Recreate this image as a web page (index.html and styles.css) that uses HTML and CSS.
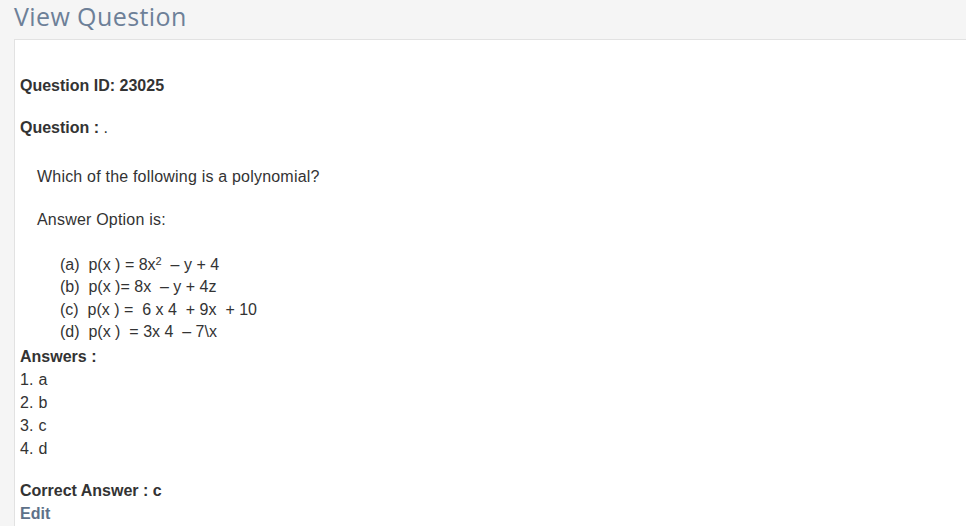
FILE: index.html
```html
<!DOCTYPE html>
<html>
<head>
<meta charset="utf-8">
<link rel="stylesheet" href="styles.css">
</head>
<body>
<h1 class="page-title">View Question</h1>
<div class="panel">
  <p class="label qid">Question ID: 23025</p>
  <p class="label qhead">Question : <span class="dot">.</span></p>
  <div class="question">
    <p class="qtext">Which of the following is a polynomial?</p>
    <p class="qtext opt-head">Answer Option is:</p>
    <div class="options">
      <div class="opt">(a)  p(x ) = 8x<sup>2</sup>  – y + 4</div>
      <div class="opt">(b)  p(x )= 8x  – y + 4z</div>
      <div class="opt">(c)  p(x ) =  6 x 4  + 9x  + 10</div>
      <div class="opt">(d)  p(x )  = 3x 4  – 7\x</div>
    </div>
  </div>
  <p class="label answers-head">Answers :</p>
  <ol class="answers">
    <li>1. a</li>
    <li>2. b</li>
    <li>3. c</li>
    <li>4. d</li>
  </ol>
  <p class="label correct">Correct Answer : c</p>
  <a class="edit" href="#">Edit</a>
</div>
</body>
</html>
```

FILE: styles.css
```css
html, body {
  margin: 0;
  padding: 0;
  background: #f5f5f5;
  height: 100%;
  overflow: hidden;
}
body {
  font-family: "Liberation Sans", Arial, sans-serif;
  font-size: 16px;
  color: #333;
}
.page-title {
  margin: 0;
  padding-left: 14px;
  font-family: "Open Sans", sans-serif;
  font-weight: 400;
  font-size: 25px;
  letter-spacing: 0.4px;
  line-height: 33px;
  color: #6d8098;
}
.panel {
  margin-top: 6px;
  margin-left: 14px;
  background: #fff;
  border-top: 1px solid #e2e2e2;
  border-left: 1px solid #e2e2e2;
  padding: 34px 0 40px 5px;
  min-height: 600px;
}
p { margin: 0; }
.label {
  font-weight: bold;
  line-height: 23px;
}
.qhead { margin-top: 19px; }
.dot { font-weight: normal; }
.question {
  padding-left: 17px;
  margin-top: 26px;
}
.qtext {
  line-height: 23px;
  letter-spacing: 0.2px;
}
.opt-head { margin-top: 20px; }
.options {
  margin-top: 23px;
  padding-left: 23px;
}
.opt {
  white-space: pre;
  line-height: 22.4px;
}
.opt sup {
  font-size: 11px;
  line-height: 0;
  vertical-align: 5px;
}
.answers-head { margin-top: 1px; }
.answers {
  list-style: none;
  margin: 0;
  padding: 0;
}
.answers li {
  line-height: 23px;
  letter-spacing: 0.2px;
}
.correct { margin-top: 19px; }
.edit {
  display: block;
  width: max-content;
  line-height: 23px;
  font-weight: bold;
  color: #5e7189;
  text-decoration: none;
}
```
